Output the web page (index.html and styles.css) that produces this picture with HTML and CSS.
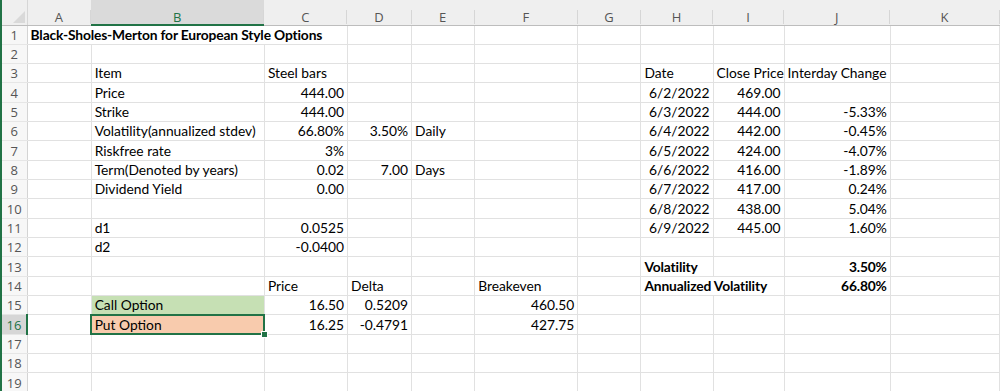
FILE: index.html
```html
<!DOCTYPE html>
<html>
  <head>
    <meta name="viewport" content="width=device-width, initial-scale=1.0">
    <title>Black-Sholes-Merton</title>
    <link rel="stylesheet" href="styles.css">
  </head>
  <body>
    <div class="sheet">
      <table class="grid">
        <colgroup>
          <col class="w-rh"><col class="w-a"><col class="w-b"><col class="w-c"><col class="w-d"><col class="w-e">
          <col class="w-f"><col class="w-g"><col class="w-h"><col class="w-i"><col class="w-j"><col class="w-k">
        </colgroup>
        <tr class="col-heads">
          <th class="corner"><svg width="12" height="12" viewBox="0 0 12 12"><polygon points="12,0 12,12 0,12" fill="#d9d9d9"/></svg></th>
          <th><span>A</span></th><th class="active"><span>B</span></th><th><span>C</span></th><th><span>D</span></th>
          <th><span>E</span></th><th><span>F</span></th><th><span>G</span></th><th><span>H</span></th>
          <th><span>I</span></th><th><span>J</span></th><th><span>K</span></th>
        </tr>
        <tr><th class="rn">1</th><td colspan="3" class="b">Black-Sholes-Merton for European Style Options</td><td></td><td></td><td></td><td></td><td></td><td></td><td></td><td></td></tr>
        <tr><th class="rn">2</th><td></td><td></td><td></td><td></td><td></td><td></td><td></td><td></td><td></td><td></td><td></td></tr>
        <tr><th class="rn">3</th><td></td><td>Item</td><td>Steel bars</td><td></td><td></td><td></td><td></td><td>Date</td><td>Close Price</td><td>Interday Change</td><td></td></tr>
        <tr><th class="rn">4</th><td></td><td>Price</td><td class="n">444.00</td><td></td><td></td><td></td><td></td><td class="n">6/2/2022</td><td class="n">469.00</td><td></td><td></td></tr>
        <tr><th class="rn">5</th><td></td><td>Strike</td><td class="n">444.00</td><td></td><td></td><td></td><td></td><td class="n">6/3/2022</td><td class="n">444.00</td><td class="n">-5.33%</td><td></td></tr>
        <tr><th class="rn">6</th><td></td><td>Volatility(annualized stdev)</td><td class="n">66.80%</td><td class="n">3.50%</td><td>Daily</td><td></td><td></td><td class="n">6/4/2022</td><td class="n">442.00</td><td class="n">-0.45%</td><td></td></tr>
        <tr><th class="rn">7</th><td></td><td>Riskfree rate</td><td class="n">3%</td><td></td><td></td><td></td><td></td><td class="n">6/5/2022</td><td class="n">424.00</td><td class="n">-4.07%</td><td></td></tr>
        <tr><th class="rn">8</th><td></td><td>Term(Denoted by years)</td><td class="n">0.02</td><td class="n">7.00</td><td>Days</td><td></td><td></td><td class="n">6/6/2022</td><td class="n">416.00</td><td class="n">-1.89%</td><td></td></tr>
        <tr><th class="rn">9</th><td></td><td>Dividend Yield</td><td class="n">0.00</td><td></td><td></td><td></td><td></td><td class="n">6/7/2022</td><td class="n">417.00</td><td class="n">0.24%</td><td></td></tr>
        <tr><th class="rn">10</th><td></td><td></td><td></td><td></td><td></td><td></td><td></td><td class="n">6/8/2022</td><td class="n">438.00</td><td class="n">5.04%</td><td></td></tr>
        <tr><th class="rn">11</th><td></td><td>d1</td><td class="n">0.0525</td><td></td><td></td><td></td><td></td><td class="n">6/9/2022</td><td class="n">445.00</td><td class="n">1.60%</td><td></td></tr>
        <tr><th class="rn">12</th><td></td><td>d2</td><td class="n">-0.0400</td><td></td><td></td><td></td><td></td><td></td><td></td><td></td><td></td></tr>
        <tr><th class="rn">13</th><td></td><td></td><td></td><td></td><td></td><td></td><td></td><td class="b">Volatility</td><td></td><td class="n b">3.50%</td><td></td></tr>
        <tr><th class="rn">14</th><td></td><td></td><td>Price</td><td>Delta</td><td></td><td>Breakeven</td><td></td><td colspan="2" class="b">Annualized Volatility</td><td class="n b">66.80%</td><td></td></tr>
        <tr><th class="rn">15</th><td></td><td class="call">Call Option</td><td class="n">16.50</td><td class="n">0.5209</td><td></td><td class="n">460.50</td><td></td><td></td><td></td><td></td><td></td></tr>
        <tr><th class="rn active">16</th><td></td><td class="put selected">Put Option</td><td class="n">16.25</td><td class="n">-0.4791</td><td></td><td class="n">427.75</td><td></td><td></td><td></td><td></td><td></td></tr>
        <tr><th class="rn">17</th><td></td><td></td><td></td><td></td><td></td><td></td><td></td><td></td><td></td><td></td><td></td></tr>
        <tr><th class="rn">18</th><td></td><td></td><td></td><td></td><td></td><td></td><td></td><td></td><td></td><td></td><td></td></tr>
        <tr><th class="rn">19</th><td></td><td></td><td></td><td></td><td></td><td></td><td></td><td></td><td></td><td></td><td></td></tr>
      </table>
    </div>
  </body>
</html>
```

FILE: styles.css
```css
body {
  margin: 0;
  padding: 0;
  background: #fff;
  overflow: hidden;
}
.sheet {
  border-left: 2px solid #217346;
  height: 391px;
  overflow: hidden;
}
.grid {
  table-layout: fixed;
  border-collapse: collapse;
  width: 998px;
  font-family: Lato, "Liberation Sans", sans-serif;
  font-size: 13.8px;
  color: #000;
}
.w-rh { width: 25px; }
.w-a { width: 64px; }
.w-b { width: 173px; }
.w-c { width: 83px; }
.w-d { width: 64px; }
.w-e { width: 63px; }
.w-f { width: 103px; }
.w-g { width: 63px; }
.w-h { width: 72px; }
.w-i { width: 71px; }
.w-j { width: 106px; }
.w-k { width: 109px; }

td {
  height: 19.33px;
  padding: 0 3px 2px;
  line-height: 15px;
  vertical-align: bottom;
  white-space: nowrap;
  overflow: hidden;
  border-right: 1px solid #e1e1e1;
  border-bottom: 1px solid #e1e1e1;
  box-sizing: border-box;
}
td.n { text-align: right; }
td.b {
  font-weight: bold;
  letter-spacing: -0.15px;
}
td.call { background: #c6e0b4; }
td.put { background: #f8cbad; }
td.selected {
  position: relative;
  overflow: visible;
}
td.selected::before {
  content: "";
  position: absolute;
  left: -2px;
  top: -1px;
  right: -1px;
  bottom: -1px;
  border: 2px solid #217346;
}
td.selected::after {
  content: "";
  position: absolute;
  right: -4px;
  bottom: -4px;
  width: 5px;
  height: 5px;
  background: #217346;
  border: 1px solid #fff;
}

.col-heads th {
  height: 25px;
  padding: 10px 0 0;
  background: #efefef;
  border-bottom: 1px solid #bdbdbd;
  font-family: "Open Sans", sans-serif;
  font-weight: normal;
  font-size: 13px;
  color: #555;
  vertical-align: top;
  box-sizing: border-box;
}
.col-heads th span {
  display: block;
  height: 14px;
  line-height: 14px;
  border-right: 1px solid #d6d6d6;
}
.col-heads th.active {
  background: #dadada;
  border-bottom: 2px solid #217346;
  color: #217346;
}
.col-heads th.corner {
  padding: 0;
  text-align: right;
  vertical-align: bottom;
  border-right: 1px solid #d6d6d6;
}
.corner svg {
  display: block;
  margin: 0 2px 2px auto;
}

th.rn {
  background: #f7f7f7;
  border-right: 1px solid #d4d4d4;
  border-bottom: 1px solid #e6e6e6;
  font-family: "Open Sans", sans-serif;
  font-weight: normal;
  font-size: 13px;
  color: #555;
  text-align: center;
  vertical-align: bottom;
  line-height: 16px;
  padding: 0 0 1px;
}
th.rn.active {
  background: #d6d6d6;
  border-right: 2px solid #217346;
  color: #217346;
}
```
